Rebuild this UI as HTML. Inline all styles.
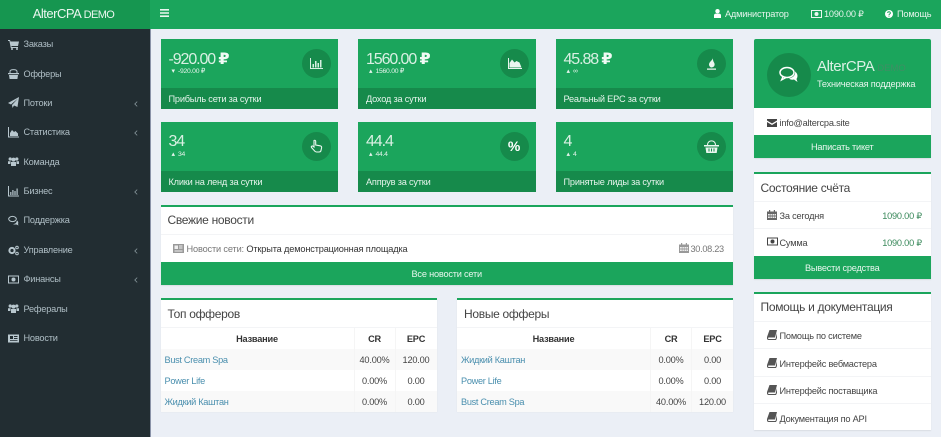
<!DOCTYPE html>
<html lang="ru"><head><meta charset="utf-8"><title>AlterCPA</title>
<style>
*{box-sizing:border-box}
html,body{margin:0;padding:0;width:941px;height:437px;overflow:hidden;background:#ebeff6;font-family:"Liberation Sans",sans-serif;font-size:9.2px;letter-spacing:-.2px;color:#333}
div,span,a,svg{position:absolute}
#w{left:0;top:0;width:941px;height:437px;filter:blur(.35px)}
.t{white-space:nowrap;line-height:12px}
#hd{left:150px;top:0;width:791px;height:29px;background:#1ba55c}
#logo{left:-1.5px;top:0;width:150px;height:29px;color:#eaf6ef;font-size:13px;line-height:28px;text-align:center;letter-spacing:-.5px}
#lb{left:0;top:0;width:150px;height:29px;background:#169650}
#logo small{font-size:11px;letter-spacing:-.6px}
#sb{left:0;top:29px;width:150px;height:408px;background:#222d32}
#line{left:150px;top:29px;width:1px;height:408px;background:#8a93a8}
.m{left:23.5px;color:#b0bfc6;margin-top:.4px}
.ic{fill:#b8c7ce;left:8px;width:11px;height:11px}
.ch{left:134px;width:4px;height:6px;fill:none;stroke:#8a9a9f;stroke-width:1;margin-top:1px}
.c{width:178px;height:70px;background:#1ba55c}
.c .f{left:0;bottom:0;width:100%;height:21px;background:#168a4b;line-height:22px;padding-left:8px;white-space:nowrap;color:#e6f4ec}
.c .n{left:8px;top:9.5px;color:#d9f0e3;font-size:16px;line-height:20px;white-space:nowrap;letter-spacing:-1.1px}
.c .n b{font-family:"DejaVu Sans",sans-serif;font-size:16px;font-weight:700;color:#f0faf4;letter-spacing:0}
.c .s{left:11px;top:27.5px;color:#e6f4ec;font-size:6.8px;line-height:10px;white-space:nowrap;letter-spacing:-.25px}
.c .o{left:141.5px;top:10px;width:29px;height:29px;border-radius:50%;background:#168a4b}
.c svg{left:7px;top:7px;width:15px;height:15px}
.b{background:#fff;box-shadow:0 1px 1px rgba(0,0,0,.08)}
.tp{border-top:2px solid #1ba55c}
.h{left:7px;color:#444;font-size:12px;line-height:16px;white-space:nowrap;letter-spacing:-.3px}
.hr{left:0;height:1px;width:100%;background:#f3f4f6}
.btn{left:0;background:#1ba55c;color:#e8f6ee;text-align:center;width:100%;height:23px;line-height:25px}
.row{left:0;width:100%;height:21px}
.cell{top:0;height:100%;line-height:23px;text-align:center;color:#444;border-left:1px solid #f5f5f5}
.lk{left:4px;top:0;line-height:23px;white-space:nowrap;color:#4a8fae;letter-spacing:-.3px}
.d{color:#444;white-space:nowrap;line-height:12px;margin-top:1px}
.g{color:#3b8a5c;white-space:nowrap;line-height:12px;margin-top:1px}
.di{fill:#555;width:10px;height:10px}
</style></head><body><div id="w">

<div id="hd"></div>
<div id="lb"></div>
<div id="logo">AlterCPA <small>DEMO</small></div>
<svg style="left:160px;top:9px;width:9px;height:8px" viewBox="0 0 9 8"><path fill="#eaf6ef" d="M0 0h9v1.600H0zM0 3.200h9v1.600H0zM0 6.400h9V8H0z"/></svg>

<svg style="left:714px;top:9px;width:7px;height:9px" viewBox="0 0 7 9"><circle cx="3.500" cy="2.200" r="2.200" fill="#fff"/><path fill="#fff" d="M0 9V6.500C0 5 1 4.600 2 4.600h3c1 0 2 .4 2 1.900V9z"/></svg>
<span class="t" style="left:725px;top:7.500px;color:#e6f4ec">Администратор</span>
<svg style="left:811px;top:9.500px;width:11px;height:8px" viewBox="0 0 11 8"><rect x=".5" y=".5" width="10" height="7" fill="none" stroke="#eaf6ef"/><circle cx="5.500" cy="4" r="2" fill="#eaf6ef"/></svg>
<span class="t" style="left:824px;top:7.500px;color:#e6f4ec">1090.00 ₽</span>
<svg style="left:885px;top:9.500px;width:8px;height:8px" viewBox="0 0 8 8"><circle cx="4" cy="4" r="4" fill="#fff"/><path d="M2.700 3c0-1.600 2.700-1.600 2.700 0 0 1-1.400 1-1.400 2" fill="none" stroke="#1ba55c"/><rect x="3.500" y="5.600" width="1" height="1" fill="#1ba55c"/></svg>
<span class="t" style="left:897px;top:7.500px;color:#e6f4ec">Помощь</span>

<div id="sb"></div><div id="line"></div>
<svg class="ic" style="top:39px" viewBox="0 0 11 11"><path d="M0 1h2l.5 1.500H11L10 7H3.400L3.600 8H10v1H2.800L1.400 2H0z"/><circle cx="4" cy="10" r="1"/><circle cx="9" cy="10" r="1"/></svg><span class="t m" style="top:38px">Заказы</span>
<svg class="ic" style="top:68px" viewBox="0 0 11 11"><path d="M0 5h11v1.200H0zM1 7h9l-.6 4H1.600z"/><path d="M2 5V3.500C2 1 9 1 9 3.500V5" fill="none" stroke="#b8c7ce"/></svg><span class="t m" style="top:67.500px">Офферы</span>
<svg class="ic" style="top:97px" viewBox="0 0 11 11"><path d="M11 0 9.500 10 6 8.500 4.500 11 4 8 10 1.500 3 7.500 0 6z"/></svg><span class="t m" style="top:96.500px">Потоки</span>
<svg class="ch" style="top:100px" viewBox="0 0 5 7"><path d="M4 .5 1 3.500 4 6.500"/></svg>
<svg class="ic" style="top:127px" viewBox="0 0 11 11"><path d="M0 0h1v9.500h10v1H0zM2 9V6l2-3 2 2 1.500-1L10 6.500V9z"/></svg><span class="t m" style="top:126px">Статистика</span>
<svg class="ch" style="top:129px" viewBox="0 0 5 7"><path d="M4 .5 1 3.500 4 6.500"/></svg>
<svg class="ic" style="top:156px" viewBox="0 0 11 11"><circle cx="2.200" cy="3" r="1.600"/><circle cx="8.800" cy="3" r="1.600"/><circle cx="5.500" cy="3.600" r="2"/><path d="M0 5.200h2.600L2.400 8H0zM8.400 5.200H11V8H8.600zM3 6h5v4H3z"/></svg><span class="t m" style="top:155.500px">Команда</span>
<svg class="ic" style="top:186px" viewBox="0 0 11 11"><path d="M0 0h1v9.500h10v1H0zM2.200 6h1.200v3H2.200zM4.300 4h1.200v5H4.300zM6.400 5h1.200v4H6.400zM8.500 2.500h1.200V9H8.500z"/></svg><span class="t m" style="top:185px">Бизнес</span>
<svg class="ch" style="top:188px" viewBox="0 0 5 7"><path d="M4 .5 1 3.500 4 6.500"/></svg>
<svg class="ic" style="top:215px" viewBox="0 0 11 11"><ellipse cx="4.500" cy="4" rx="3.800" ry="2.600" fill="none" stroke="#b8c7ce"/><path d="M9 5.500c1.500 1 1.500 2.500 1 3.500l.5 1.500-2-1H5l3-1.500z"/></svg><span class="t m" style="top:214px">Поддержка</span>
<svg class="ic" style="top:245px" viewBox="0 0 11 11"><circle cx="4" cy="5.500" r="2.600" fill="none" stroke="#b8c7ce" stroke-width="2"/><circle cx="9" cy="2.500" r="1.300" fill="none" stroke="#b8c7ce"/><circle cx="9" cy="8.500" r="1.300" fill="none" stroke="#b8c7ce"/></svg><span class="t m" style="top:243.500px">Управление</span>
<svg class="ch" style="top:247px" viewBox="0 0 5 7"><path d="M4 .5 1 3.500 4 6.500"/></svg>
<svg class="ic" style="top:274px" viewBox="0 0 11 11"><rect x=".5" y="2" width="10" height="7" fill="none" stroke="#b8c7ce"/><circle cx="5.500" cy="5.500" r="2"/></svg><span class="t m" style="top:273px">Финансы</span>
<svg class="ch" style="top:276px" viewBox="0 0 5 7"><path d="M4 .5 1 3.500 4 6.500"/></svg>
<svg class="ic" style="top:303px" viewBox="0 0 11 11"><circle cx="2.200" cy="3" r="1.600"/><circle cx="8.800" cy="3" r="1.600"/><circle cx="5.500" cy="3.600" r="2"/><path d="M0 5.200h2.600L2.400 8H0zM8.400 5.200H11V8H8.600zM3 6h5v4H3z"/></svg><span class="t m" style="top:302.500px">Рефералы</span>
<svg class="ic" style="top:333px" viewBox="0 0 11 11"><path d="M0 1.500h11v8H0z"/><path fill="#222d32" d="M2 3h3v3H2zM6 3h3.500v1H6zM6 5h3.500v1H6zM2 7h7.500v.8H2z"/></svg><span class="t m" style="top:332px">Новости</span>

<!-- stat cards -->
<div class="c" style="left:160.500px;top:39px;width:177.500px"><span class="n">-920.00 <b>₽</b></span><span class="s">▾&nbsp; -920.00 ₽</span><span class="o"><svg viewBox="0 0 15 15"><path fill="#d7efe1" d="M1 2h1v10h12v1H1zM3.500 8h1.500v3.500H3.500zM6 5h1.500v6.500H6zM8.500 7H10v4.500H8.500zM11 4h1.500v7.500H11z"/></svg></span><div class="f">Прибыль сети за сутки</div></div>
<div class="c" style="left:358px;top:39px;width:177.500px"><span class="n">1560.00 <b>₽</b></span><span class="s">▴&nbsp; 1560.00 ₽</span><span class="o"><svg viewBox="0 0 15 15"><path fill="#eaf6ef" d="M1 2h1v10h13v1H1zM2.500 11.500V7L5 3.500 7.500 6.500 9.500 5l3 1.500 2 5z"/></svg></span><div class="f">Доход за сутки</div></div>
<div class="c" style="left:555.500px;top:39px;width:177.500px"><span class="n">45.88 <b>₽</b></span><span class="s">▴&nbsp; ∞</span><span class="o"><svg viewBox="0 0 15 15"><path fill="#eaf6ef" d="M9 1c.5 3-4 4.500-4 7.500C5 10 6 11 7 11.500c3 0 4-2 3.500-4C10 6 8.500 5 9 1zM3 12.500h9v1.200H3z"/></svg></span><div class="f">Реальный EPC за сутки</div></div>
<div class="c" style="left:160.500px;top:122px;width:177.500px"><span class="n">34</span><span class="s">▴&nbsp; 34</span><span class="o"><svg viewBox="0 0 15 15"><path fill="none" stroke="#eaf6ef" stroke-width="1.100" d="M5 1.500c1-.6 1.700 0 1.700 1V6l4.500.8c1 .2 1.600 1 1.400 2l-.6 2.700c-.2 1-1 1.500-2 1.500H7.500c-1 0-1.500-.5-2-1.200L2.500 8.500c-.6-1 .6-2 1.600-1.200L5 8z"/></svg></span><div class="f">Клики на ленд за сутки</div></div>
<div class="c" style="left:358px;top:122px;width:177.500px"><span class="n">44.4</span><span class="s">▴&nbsp; 44.4</span><span class="o"><span style="left:7px;top:6px;width:15px;text-align:center;color:#fff;font-weight:700;font-size:14px;line-height:17px">%</span></span><div class="f">Аппрув за сутки</div></div>
<div class="c" style="left:555.500px;top:122px;width:177.500px"><span class="n">4</span><span class="s">▴&nbsp; 4</span><span class="o"><svg viewBox="0 0 15 15"><path fill="#eaf6ef" d="M0 6h15v1.500H0zM1.500 8.500h12L12.700 14H2.300z"/><path d="M3.500 6c0-5.500 8-5.500 8 0" fill="none" stroke="#eaf6ef" stroke-width="1.100"/><path stroke="#168a4b" d="M5 9.500v3M7.500 9.500v3M10 9.500v3"/></svg></span><div class="f">Принятые лиды за сутки</div></div>

<!-- news -->
<div class="b tp" style="left:160.500px;top:205px;width:572.500px;height:80px">
<span class="h" style="top:5px">Свежие новости</span><div class="hr" style="top:27px"></div>
<svg style="left:12.500px;top:36.500px;width:11px;height:9px" viewBox="0 0 11 9"><path fill="#999" d="M0 0h11v9H0z"/><path fill="#eee" d="M1.500 1.500h3.500v3.500H1.500zM6 1.500h3.500v1H6zM6 3.500h3.500v1H6zM1.500 6.500h8v1h-8z"/></svg>
<span class="t" style="left:26px;top:35.500px;color:#777;letter-spacing:-.15px">Новости сети: <span style="position:static;color:#333">Открыта демонстрационная площадка</span></span>
<svg style="left:518px;top:36px;width:10px;height:10px" viewBox="0 0 10 10"><path fill="#999" d="M0 1.500h10V10H0z"/><path fill="#eee" d="M1 4h1.800v1.500H1zM3.400 4h1.500v1.500H3.400zM5.500 4h1.500v1.500H5.500zM7.500 4H9v1.500H7.500zM1 6.500h1.800V8H1zM3.400 6.500h1.500V8H3.400zM5.500 6.500h1.500V8H5.500zM7.500 6.500H9V8H7.500z"/><path fill="#999" d="M2 0h1.200v2H2zM6.800 0H8v2H6.800z"/></svg>
<span class="t" style="left:530px;top:35.500px;color:#777;letter-spacing:-.3px">30.08.23</span>
<div class="btn" style="top:55px">Все новости сети</div></div>

<!-- top offers -->
<div class="b tp" style="left:160.500px;top:298px;width:276px;height:113px">
<span class="h" style="top:5.500px">Топ офферов</span>
<div class="row" style="top:27px;border-top:1px solid #f3f4f6;height:22px"><span class="cell" style="left:0;width:193px;border:0;font-weight:700;color:#333">Название</span><span class="cell" style="left:193px;width:41px;font-weight:700;color:#333">CR</span><span class="cell" style="left:234px;width:42px;font-weight:700;color:#333">EPC</span></div>
<div class="row" style="top:49px;background:#f9f9f9"><span class="lk">Bust Cream Spa</span><span class="cell" style="left:193px;width:41px">40.00%</span><span class="cell" style="left:234px;width:42px">120.00</span></div>
<div class="row" style="top:70px"><span class="lk">Power Life</span><span class="cell" style="left:193px;width:41px">0.00%</span><span class="cell" style="left:234px;width:42px">0.00</span></div>
<div class="row" style="top:90.500px;background:#f9f9f9"><span class="lk">Жидкий Каштан</span><span class="cell" style="left:193px;width:41px">0.00%</span><span class="cell" style="left:234px;width:42px">0.00</span></div>
</div>

<!-- new offers -->
<div class="b tp" style="left:457px;top:298px;width:276px;height:113px">
<span class="h" style="top:5.500px">Новые офферы</span>
<div class="row" style="top:27px;border-top:1px solid #f3f4f6;height:22px"><span class="cell" style="left:0;width:193px;border:0;font-weight:700;color:#333">Название</span><span class="cell" style="left:193px;width:41px;font-weight:700;color:#333">CR</span><span class="cell" style="left:234px;width:42px;font-weight:700;color:#333">EPC</span></div>
<div class="row" style="top:49px;background:#f9f9f9"><span class="lk">Жидкий Каштан</span><span class="cell" style="left:193px;width:41px">0.00%</span><span class="cell" style="left:234px;width:42px">0.00</span></div>
<div class="row" style="top:70px"><span class="lk">Power Life</span><span class="cell" style="left:193px;width:41px">0.00%</span><span class="cell" style="left:234px;width:42px">0.00</span></div>
<div class="row" style="top:90.500px;background:#f9f9f9"><span class="lk">Bust Cream Spa</span><span class="cell" style="left:193px;width:41px">40.00%</span><span class="cell" style="left:234px;width:42px">120.00</span></div>
</div>

<!-- support -->
<div class="b" style="left:753.500px;top:39px;width:177.500px;height:119px;border-radius:2px">
<div style="left:0;top:0;width:100%;height:69px;background:#1ba55c;border-radius:2px 2px 0 0"></div>
<div style="left:13.500px;top:14px;width:44px;height:44px;border-radius:50%;background:#168a4b"></div>
<svg style="left:25.500px;top:27px;width:20px;height:18px" viewBox="0 0 20 18"><ellipse cx="8" cy="6.500" rx="7" ry="5" fill="none" stroke="#fff" stroke-width="1.500"/><path fill="none" stroke="#fff" stroke-width="1.300" d="M4 10.500 2.500 14 7 11.500"/><path fill="#fff" d="M16 5.500c3 2 3 5.500 1.500 7.500l1 3-3.500-2.500c-2 .5-4 0-5-1 3-.5 7-3 6-7z"/></svg>
<span class="t" style="left:63.500px;top:19px;color:#dcf1e5;font-size:15px;line-height:18px;letter-spacing:-.4px">AlterCPA <span style="position:static;font-size:9.500px;color:#3f8f64;letter-spacing:0">DEMO</span></span>
<span class="t" style="left:63.500px;top:38.500px;color:#e6f4ec">Техническая поддержка</span>
<svg style="left:13.500px;top:79.500px;width:10px;height:8px" viewBox="0 0 10 8"><path fill="#444" d="M0 0h10v1.500L5 4.500 0 1.500zM0 3l5 3 5-3v5H0z"/></svg>
<span class="t" style="left:26px;top:77.500px;color:#444">info@altercpa.site</span>
<div class="btn" style="top:96px">Написать тикет</div></div>

<!-- account -->
<div class="b tp" style="left:753.500px;top:172px;width:177.500px;height:107px">
<span class="h" style="top:5.500px">Состояние счёта</span>
<div class="hr" style="top:27px"></div><div class="hr" style="top:54px"></div>
<svg class="di" style="left:13.500px;top:35.500px" viewBox="0 0 10 10"><path fill="#666" d="M0 1.500h10V10H0z"/><path fill="#eee" d="M1 4h1.800v1.500H1zM3.400 4h1.500v1.500H3.400zM5.500 4h1.500v1.500H5.500zM7.500 4H9v1.500H7.500zM1 6.500h1.800V8H1zM3.400 6.500h1.500V8H3.400zM5.500 6.500h1.500V8H5.500zM7.500 6.500H9V8H7.500z"/><path fill="#666" d="M2 0h1.200v2H2zM6.800 0H8v2H6.800z"/></svg>
<span class="d" style="left:26px;top:34.500px">За сегодня</span><span class="g" style="right:9px;top:34.500px">1090.00 ₽</span>
<svg class="di" style="left:13px;top:63px;width:11px;height:9px" viewBox="0 0 11 9"><rect x=".5" y="1" width="10" height="7" fill="none" stroke="#444"/><circle cx="5.500" cy="4.500" r="2" fill="#444"/></svg>
<span class="d" style="left:26px;top:62px">Сумма</span><span class="g" style="right:9px;top:62px">1090.00 ₽</span>
<div class="btn" style="top:82px">Вывести средства</div></div>

<!-- help -->
<div class="b tp" style="left:753.500px;top:292px;width:177.500px;height:138px">
<span class="h" style="top:5px">Помощь и документация</span>
<div class="hr" style="top:27px"></div><div class="hr" style="top:54px"></div><div class="hr" style="top:82px"></div><div class="hr" style="top:109px"></div>
<svg class="di" style="left:13.500px;top:36px" viewBox="0 0 10 10"><path fill="#555" d="M2.500 0H10L8 7.500H1.500c-.5 0-.5 1.500 0 1.500H8.500L10 3v5L9 10H1.500C0 10-.3 8 0 7z"/></svg><span class="d" style="left:26px;top:35px">Помощь по системе</span>
<svg class="di" style="left:13.500px;top:63.500px" viewBox="0 0 10 10"><path fill="#555" d="M2.500 0H10L8 7.500H1.500c-.5 0-.5 1.500 0 1.500H8.500L10 3v5L9 10H1.500C0 10-.3 8 0 7z"/></svg><span class="d" style="left:26px;top:62.500px">Интерфейс вебмастера</span>
<svg class="di" style="left:13.500px;top:91px" viewBox="0 0 10 10"><path fill="#555" d="M2.500 0H10L8 7.500H1.500c-.5 0-.5 1.500 0 1.500H8.500L10 3v5L9 10H1.500C0 10-.3 8 0 7z"/></svg><span class="d" style="left:26px;top:90px">Интерфейс поставщика</span>
<svg class="di" style="left:13.500px;top:118px" viewBox="0 0 10 10"><path fill="#555" d="M2.500 0H10L8 7.500H1.500c-.5 0-.5 1.500 0 1.500H8.500L10 3v5L9 10H1.500C0 10-.3 8 0 7z"/></svg><span class="d" style="left:26px;top:117.500px">Документация по API</span>
</div>
</div></body></html>
